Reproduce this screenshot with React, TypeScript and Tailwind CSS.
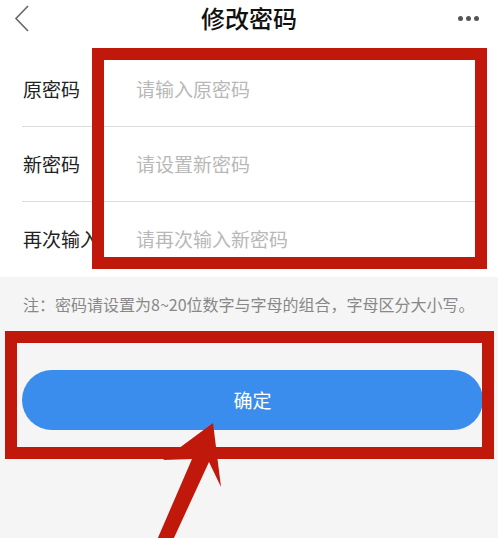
export default function App() {
  const rows = [
    { label: "原密码", placeholder: "请输入原密码" },
    { label: "新密码", placeholder: "请设置新密码" },
    { label: "再次输入密码", placeholder: "请再次输入新密码" },
  ];

  return (
    <div
      className="relative min-h-[538px] w-full overflow-hidden bg-[#f5f5f5]"
      style={{ fontFamily: '"Noto Sans CJK SC", "Noto Sans", sans-serif' }}
    >
      {/* Header */}
      <div className="bg-white">
        <div className="grid h-[36px] grid-cols-[1fr_auto_1fr] items-center px-[14px]">
          <svg width="16" height="28" viewBox="0 0 16 28" className="mt-[1px]">
            <polyline
              points="14,1 2,13.5 14,26"
              fill="none"
              stroke="#666"
              strokeWidth="1.6"
            />
          </svg>
          <h1 className="text-[24px] font-medium text-[#111]">修改密码</h1>
          <div className="flex justify-end gap-[3px] pr-[5px]">
            <span className="size-[5px] rounded-full bg-[#555]" />
            <span className="size-[5px] rounded-full bg-[#555]" />
            <span className="size-[5px] rounded-full bg-[#555]" />
          </div>
        </div>

        {/* Form */}
        <div className="pt-[16px]">
          {rows.map((r, i) => (
            <div
              key={r.label}
              className={`mx-[22px] flex h-[75px] items-center ${
                i < rows.length - 1 ? "border-b border-[#dcdcdc]" : ""
              }`}
            >
              <span className="mr-[37px] w-[77px] shrink-0 overflow-hidden whitespace-nowrap pl-[1px] text-[19px] text-[#222]">
                {r.label}
              </span>
              <input
                placeholder={r.placeholder}
                className="min-w-0 flex-1 bg-transparent text-[19px] text-[#222] placeholder-[#b8b8b8] outline-none"
              />
            </div>
          ))}
        </div>
      </div>

      {/* Note */}
      <p className="px-[23px] pt-[15px] text-[16px] leading-[24px] text-[#888]">
        注：密码请设置为8~20位数字与字母的组合，字母区分大小写。
      </p>

      {/* Submit */}
      <div className="pt-[54px] pl-[22px] pr-[15px]">
        <button className="h-[60px] w-full rounded-full bg-[#3b8ded] text-[19px] text-white">
          确定
        </button>
      </div>

      {/* Annotations */}
      <div className="pointer-events-none absolute left-[92px] top-[48px] h-[221px] w-[395px] border-[12px] border-[#c0190c]" />
      <div className="pointer-events-none absolute left-[5px] top-[331px] h-[128px] w-[489px] border-[12px] border-[#c0190c]" />
      <svg
        className="pointer-events-none absolute left-0 top-0"
        width="498"
        height="538"
        viewBox="0 0 498 538"
      >
        <polygon
          points="213,423 221,487 209,462 173,540 157,540 192,459 163,460"
          fill="#c0190c"
        />
      </svg>
    </div>
  );
}
